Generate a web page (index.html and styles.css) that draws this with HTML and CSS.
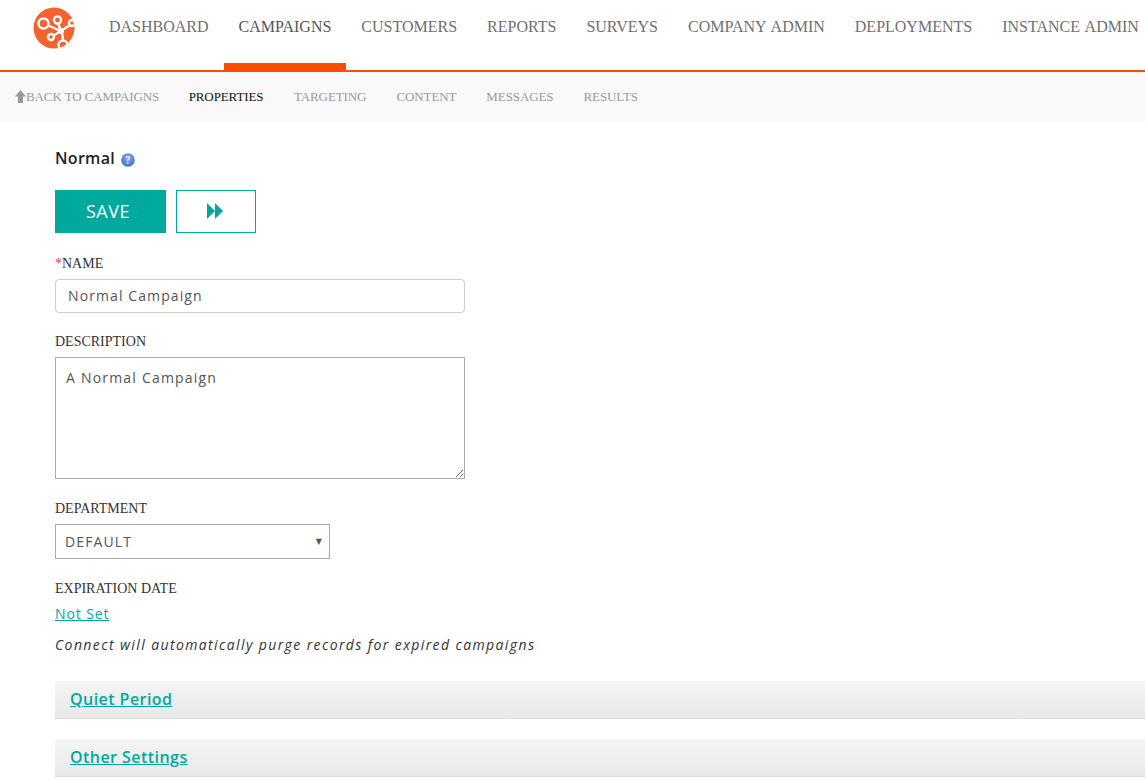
FILE: index.html
```html
<!DOCTYPE html>
<html lang="en">
<head>
<meta charset="utf-8">
<title>Normal Campaign</title>
<link rel="stylesheet" href="styles.css">
</head>
<body>
<header class="topbar">
  <a class="logo" href="#">
    <svg width="42" height="42" viewBox="0 0 42 42">
      <defs><clipPath id="lc"><circle cx="21" cy="21" r="20.5"/></clipPath></defs>
      <circle cx="21" cy="21" r="20.5" fill="#f4622d"/>
      <g clip-path="url(#lc)" fill="none" stroke="#fff" stroke-width="2.4">
        <circle cx="10.5" cy="16.5" r="5"/>
        <circle cx="24.5" cy="13" r="3.6"/>
        <circle cx="18" cy="30" r="3"/>
        <circle cx="30" cy="38" r="4.5"/>
        <circle cx="39" cy="16" r="3"/>
        <path d="M15 18.5L28 24M25 16L28 24M20.5 28.5L28 24M29 26L30 33M28 24L37 18"/>
      </g>
      <circle cx="28" cy="24" r="3" fill="#fff"/>
    </svg>
  </a>
  <nav class="mainnav">
    <a href="#">DASHBOARD</a>
    <a href="#" class="active">CAMPAIGNS</a>
    <a href="#">CUSTOMERS</a>
    <a href="#">REPORTS</a>
    <a href="#">SURVEYS</a>
    <a href="#">COMPANY ADMIN</a>
    <a href="#">DEPLOYMENTS</a>
    <a href="#">INSTANCE ADMIN</a>
  </nav>
</header>
<nav class="subnav">
  <a href="#" class="back"><svg width="11" height="13" viewBox="0 0 11 13"><path d="M5.5 0L11 6.5H8V13H3V6.5H0Z" fill="#999"/></svg>BACK TO CAMPAIGNS</a>
  <a href="#" class="current">PROPERTIES</a>
  <a href="#">TARGETING</a>
  <a href="#">CONTENT</a>
  <a href="#">MESSAGES</a>
  <a href="#">RESULTS</a>
</nav>
<main class="content">
  <h1 class="title">Normal
    <svg class="help" width="14" height="14" viewBox="0 0 14 14">
      <defs><radialGradient id="hg" cx="50%" cy="35%" r="65%"><stop offset="0" stop-color="#8fb2ea"/><stop offset="1" stop-color="#3c6cc4"/></radialGradient></defs>
      <circle cx="7" cy="7" r="6.8" fill="url(#hg)"/>
      <text x="7" y="10.5" text-anchor="middle" class="help-q">?</text>
    </svg>
  </h1>
  <div class="actions">
    <button class="btn-save" type="button">SAVE</button>
    <button class="btn-next" type="button"><svg width="16" height="16" viewBox="0 0 16 16"><path d="M0 0L8 8L0 16ZM8 0L16 8L8 16Z" fill="#00a99d"/></svg></button>
  </div>
  <label class="label label-name"><span class="req">*</span>NAME</label>
  <input class="input-name" type="text" value="Normal Campaign">
  <label class="label label-desc">DESCRIPTION</label>
  <textarea class="input-desc">A Normal Campaign</textarea>
  <label class="label label-dept">DEPARTMENT</label>
  <div class="select"><span>DEFAULT</span><i class="caret">▼</i></div>
  <label class="label label-exp">EXPIRATION DATE</label>
  <a class="notset" href="#">Not Set</a>
  <p class="note">Connect will automatically purge records for expired campaigns</p>
  <section class="panel panel-first"><a href="#">Quiet Period</a></section>
  <section class="panel"><a href="#">Other Settings</a></section>
</main>
</body>
</html>
```

FILE: styles.css
```css
* { box-sizing: border-box; }
html, body { margin: 0; padding: 0; height: 780px; overflow: hidden; background: #fff; }
body { font-family: "Open Sans", sans-serif; color: #333; }
a { text-decoration: none; }

.topbar { display: flex; height: 72px; border-bottom: 2px solid #f94d00; }
.logo { margin: 7px 0 0 33px; width: 42px; height: 42px; flex: none; }
.mainnav { display: flex; margin-left: 19px; gap: 0; white-space: nowrap; }
.mainnav a {
  font: 16px "Liberation Serif", serif;
  word-spacing: 1.5px;
  color: #6f6f6f;
  padding: 18px 15px 0;
  height: 70px;
  border-bottom: 7px solid transparent;
}
.mainnav a.active { color: #555; border-bottom-color: #f94d00; }

.subnav { display: flex; align-items: center; height: 50px; background: #f9f9f9; padding: 0 0 0 15px; }
.subnav a { font: 13px "Liberation Serif", serif; letter-spacing: -.1px; color: #999; margin-right: 30px; display: flex; align-items: center; }
.subnav a.back { margin-right: 29.5px; }
.subnav a.current { color: #111; margin-right: 30.5px; }
.subnav .back svg { margin-top: -2px; }

.content { padding: 0 0 0 55px; }
.title { margin: 0; padding-top: 26px; height: 68px; font: 600 16px/20px "Open Sans", sans-serif; color: #222; letter-spacing: .3px; }
.help { vertical-align: -3px; margin-left: 2px; }
.help-q { font: 700 10px "Open Sans", sans-serif; fill: #dfe9fb; }

.actions { display: flex; gap: 10px; height: 43px; }
.btn-save { width: 111px; height: 43px; background: #00a99d; border: 0; color: #fff; font: 18px "Open Sans", sans-serif; letter-spacing: .5px; padding: 0 5px 2px 0; }
.btn-next { width: 80px; height: 43px; background: #fff; border: 1px solid #00a99d; padding: 0 2px 1px 0; display: flex; align-items: center; justify-content: center; }

.label { display: block; font: 14px/18px "Liberation Serif", serif; color: #333; }
.label-name { margin-top: 22px; }
.req { color: #e8336d; }
.input-name { display: block; margin-top: 6px; width: 410px; height: 34px; border: 1px solid #ccc; border-radius: 4px; padding: 0 12px 2px; font: 14px "Open Sans", sans-serif; letter-spacing: 1.1px; color: #555; background: #fff; }
.label-desc { margin-top: 20px; }
.input-desc { display: block; margin-top: 6px; width: 410px; height: 122px; border: 1px solid #aaa; border-radius: 0; padding: 10px; font: 14px/20px "Open Sans", sans-serif; letter-spacing: 1.2px; color: #555; background: #fff; outline: 0; }
.label-dept { margin-top: 21px; }
.select { display: flex; align-items: center; justify-content: space-between; margin-top: 6px; width: 275px; height: 35px; border: 1px solid #aaa; padding: 0 7px 0 9px; font: 14px "Open Sans", sans-serif; letter-spacing: 1.1px; color: #555; }
.caret { font: normal 8px "DejaVu Sans", sans-serif; letter-spacing: 0; color: #555; }
.label-exp { margin-top: 21px; }
.notset { display: block; margin-top: 6px; font: 14px/20px "Open Sans", sans-serif; letter-spacing: .9px; color: #00a99d; text-decoration: underline; }
.note { margin: 11px 0 0; font: italic 14px/20px "Open Sans", sans-serif; letter-spacing: 1.39px; color: #333; }
.panel { height: 38px; margin-top: 20px; padding: 6px 15px 0; background: linear-gradient(#f5f5f5, #e8e8e8); border-bottom: 1px solid #ddd; border-radius: 3px 0 0 0; }
.panel-first { margin-top: 26px; }
.panel a { font: 600 16px/24px "Open Sans", sans-serif; color: #00a99d; text-decoration: underline; letter-spacing: .45px; }
```
